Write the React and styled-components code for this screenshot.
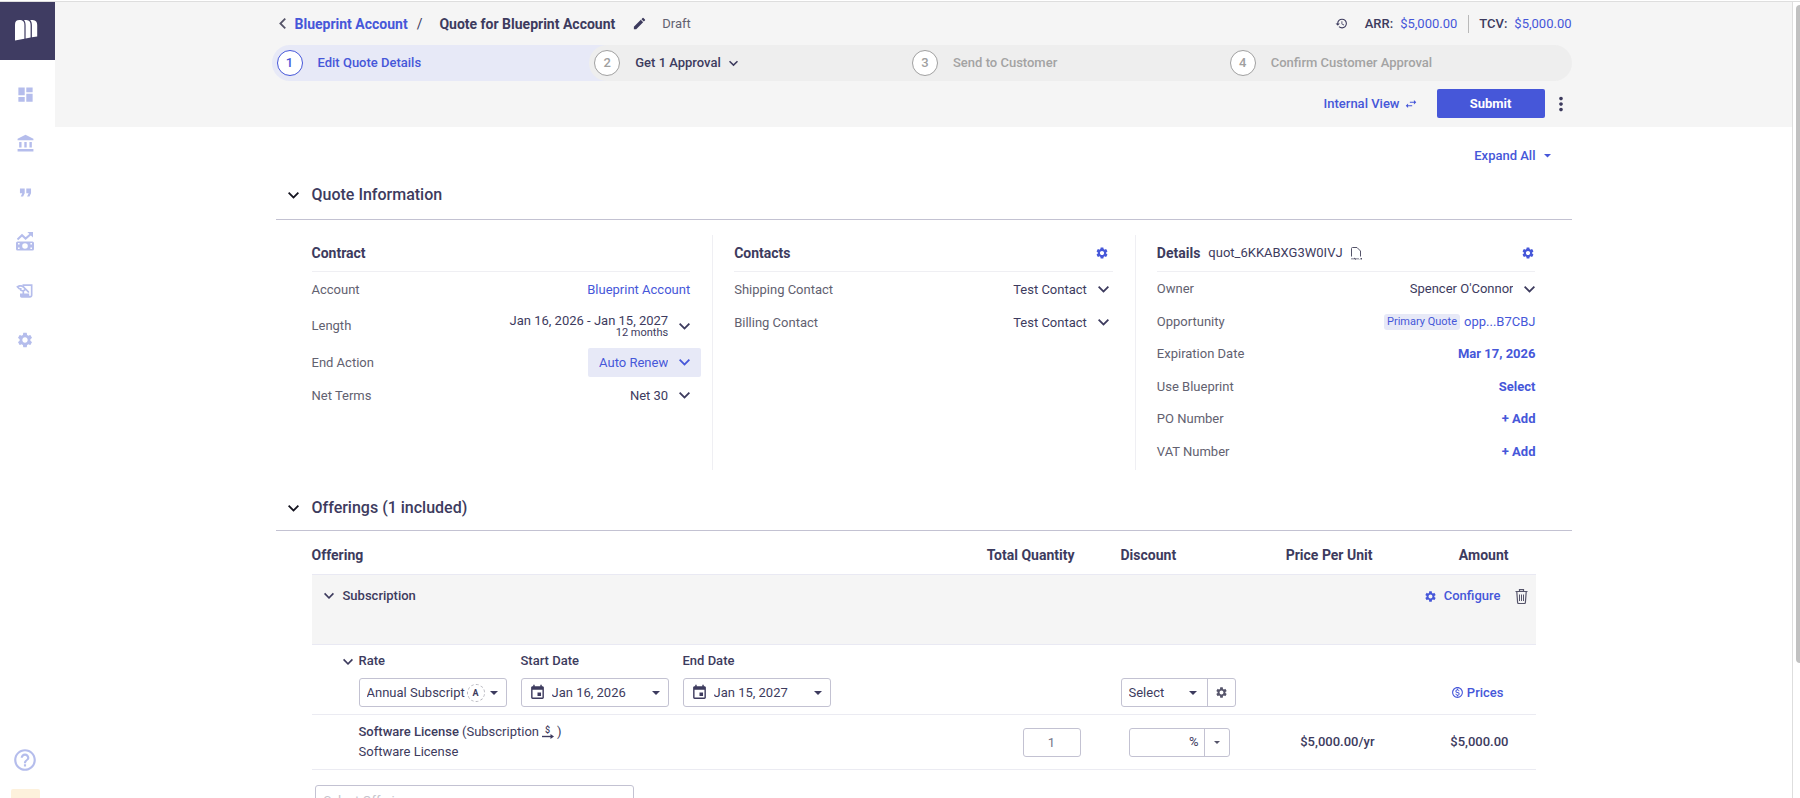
import React from 'react';
import styled, {createGlobalStyle} from 'styled-components';
import {
    MdDashboard,
    MdAccountBalance,
    MdFormatQuote,
    MdHistoryEdu,
    MdSettings,
    MdHelpOutline,
    MdHistory,
    MdEdit,
    MdSwapHoriz,
    MdMoreVert,
    MdEvent,
    MdOutlineMonetizationOn
} from 'react-icons/md';

const INK = '#3d3b5e';
const BLUE = '#4657d9';
const MUTED = '#626170';
const TINT = '#e7e9f7';
const FIELD = '#c3c2d2';

const GlobalStyle = createGlobalStyle`
    * {
        box-sizing: border-box;
    }

    body {
        margin: 0;
        background: #fff;
        color: ${INK};
        font-family: Roboto, "Liberation Sans", sans-serif;
        font-size: 13px;
        line-height: 18px;
    }

    button, input, select {
        margin: 0;
        padding: 0;
        border: 0;
        background: none;
        color: inherit;
        font: inherit;
        outline: none;
    }

    button {
        cursor: pointer;
    }

    a {
        color: ${BLUE};
        text-decoration: none;
    }

    svg {
        display: block;
        flex: none;
    }
`;

const Shell = styled.div`
    display: flex;
    height: 100vh;
    padding-top: 1px;
    overflow: hidden;
`;

const Sidebar = styled.nav`
    flex: none;
    width: 55px;
    display: flex;
    flex-direction: column;
    border-top: 1px solid #dedede;
`;

const LogoBox = styled.div`
    height: 58px;
    padding: 18px 15px;
    background: #3f3c62;
`;

const NavList = styled.div`
    flex: 1;
    width: 50px;
    padding-top: 10px;
    display: flex;
    flex-direction: column;
    align-items: center;
    color: #b5bdec;
`;

const NavLink = styled.a`
    width: 50px;
    height: 49px;
    display: flex;
    align-items: center;
    justify-content: center;
    color: inherit;
`;

const NavFooter = styled.div`
    margin-top: auto;
    display: flex;
    flex-direction: column;
    align-items: center;
    gap: 5px;
`;

const Notice = styled.div`
    width: 29px;
    height: 9px;
    border-radius: 2px 2px 0 0;
    background: #fdf1dc;
`;

const Main = styled.main`
    flex: 1;
    min-width: 0;
    overflow: hidden;
    border-top: 1px solid #dedede;
`;

const ScrollRail = styled.div`
    flex: none;
    width: 8px;
    padding: 3px 0 0 3px;
    border-top: 1px solid #dedede;
    border-left: 1px solid #dedede;
`;

const ScrollThumb = styled.div`
    height: 83%;
    border-radius: 4px 0 0 4px;
    background: #c1c1c1;
`;

const Container = styled.div`
    max-width: 1296px;
    margin: 0 auto;
`;

const Header = styled.header`
    padding-bottom: 9px;
    background: #f5f5f5;
`;

const TitleBar = styled.div`
    height: 43px;
    padding-left: 3px;
    display: flex;
    align-items: center;
    justify-content: space-between;
`;

const Crumbs = styled.div`
    display: flex;
    align-items: center;
    gap: 9px;
    font-size: 14px;
`;

const CrumbLink = styled.a`
    font-weight: 700;
`;

const QuoteTitle = styled.h1`
    margin: 0 8px;
    font-size: 14px;
    line-height: 18px;
    font-weight: 700;
`;

const Status = styled.span`
    margin-left: 6px;
    font-size: 13px;
    color: ${MUTED};
`;

const Totals = styled.div`
    display: flex;
    align-items: center;
`;

const Total = styled.div`
    display: flex;
    gap: 7px;
    padding-left: ${props => props.$divided ? '10px' : '17px'};
    margin-left: ${props => props.$divided ? '11px' : '0'};
    border-left: ${props => props.$divided ? '1px solid #b9b9b9' : '0'};

    b {
        font-weight: 500;
    }

    span {
        color: ${BLUE};
    }
`;

const IconButton = styled.button`
    display: flex;
    align-items: center;
    justify-content: center;
    color: ${props => props.$blue ? BLUE : INK};
`;

const Stepper = styled.ol`
    list-style: none;
    display: flex;
    margin: 0 0 0 -4px;
    padding: 0;
`;

/* each step slides under the round start of the next one */
const Step = styled.li`
    flex: 1;
    height: 36px;
    padding-left: 5px;
    display: flex;
    align-items: center;
    gap: 15px;
    border-radius: 18px ${props => props.$last ? '18px 18px' : '0 0'} 18px;
    background: ${props => props.$active ? TINT : '#eee'};
    color: ${props => props.$active ? BLUE : props.$next ? INK : '#a3a3a3'};
    font-weight: 500;

    & + & {
        margin-left: -29px;
    }
`;

const StepNumber = styled.span`
    width: 26px;
    height: 26px;
    display: flex;
    align-items: center;
    justify-content: center;
    border: 1px solid ${props => props.$active ? BLUE : '#a0a0a0'};
    border-radius: 50%;
    background: #fff;
    color: ${props => props.$active ? BLUE : '#a0a0a0'};
`;

const StepMenu = styled.button`
    display: flex;
    align-items: center;
    gap: 8px;
    font-weight: 500;
`;

const Actions = styled.div`
    margin-top: 8px;
    display: flex;
    align-items: center;
    justify-content: flex-end;
`;

const TextButton = styled.button`
    display: inline-flex;
    align-items: center;
    gap: ${props => props.$gap || 4}px;
    color: ${BLUE};
    font-weight: ${props => props.$strong ? 700 : 500};
`;

const SubmitButton = styled.button`
    width: 108px;
    height: 29px;
    margin: 0 5px 0 19px;
    border-radius: 2px;
    background: ${BLUE};
    color: #fff;
    font-weight: 700;
`;

const ExpandRow = styled.div`
    display: flex;
    justify-content: flex-end;
    padding: 20px 21px 0 0;
`;

const SectionHeader = styled.div`
    display: flex;
    align-items: center;
    gap: 13px;
    height: ${props => props.$tall ? '55px' : '51px'};
    padding: 6px 0 0 12px;
    border-bottom: 1px solid ${FIELD};

    h2 {
        margin: 0;
        font-size: 16px;
        line-height: 20px;
        font-weight: 500;
    }

    button {
        color: #14131f;
    }
`;

const Columns = styled.div`
    display: grid;
    grid-template-columns: repeat(3, 1fr);
    margin: 15px 14px 10px;
`;

const Column = styled.section`
    min-width: 0;
    padding: 0 22px 2px;

    & + & {
        padding-left: 21px;
        border-left: 1px solid #efeff3;
    }
`;

const ColumnHeader = styled.div`
    height: 37px;
    padding-right: ${props => props.$inset || 0}px;
    display: flex;
    align-items: center;
    justify-content: space-between;
    border-bottom: 1px solid #efeff3;
`;

const ColumnTitle = styled.div`
    display: flex;
    align-items: center;
    gap: 8px;

    h3 {
        margin: 0;
        font-size: 14px;
        line-height: 18px;
        font-weight: 700;
    }
`;

const Rows = styled.div`
    display: flex;
    flex-direction: column;
    height: ${props => props.$fill ? '196px' : 'auto'};
    padding: 1px ${props => props.$inset || 0}px 0 0;
`;

const Row = styled.div`
    flex: ${props => props.$fill ? '1' : 'none'};
    height: ${props => props.$tall ? '40px' : '33px'};
    display: flex;
    align-items: center;
    justify-content: space-between;

    & > label, & > span:first-child {
        color: ${MUTED};
    }
`;

const RowValue = styled.div`
    display: flex;
    align-items: center;
    gap: 4px;
`;

/* the select and its chevron share one grid cell */
const PickerBox = styled.span`
    height: 29px;
    margin-right: -11px;
    display: grid;
    align-items: center;
    border-radius: 2px;
    background: ${props => props.$active ? TINT : 'transparent'};
    color: ${props => props.$active ? BLUE : INK};

    & > * {
        grid-area: 1 / 1;
    }

    svg {
        justify-self: end;
        margin-right: 11px;
        pointer-events: none;
    }

    select {
        appearance: none;
        field-sizing: content;
        height: 29px;
        padding: 0 33px 0 11px;
        text-align: right;
    }
`;

const LengthButton = styled.button`
    display: flex;
    align-items: center;
    gap: 11px;
    text-align: right;
    line-height: 13px;

    small {
        display: block;
        font-size: 11px;
        line-height: 12px;
    }
`;

const Tag = styled.span`
    padding: 0 3px;
    border-radius: 3px;
    background: ${TINT};
    color: ${BLUE};
    font-size: 11px;
    line-height: 16px;
`;

const Table = styled.table`
    width: calc(100% - 72px);
    margin: 0 36px;
    border-collapse: separate;
    border-spacing: 0;
    table-layout: fixed;
`;

const HeadCell = styled.th`
    height: 43px;
    padding: 5px ${props => props.$end || 0}px 0 ${props => props.$start || 0}px;
    width: ${props => props.$width ? props.$width + 'px' : 'auto'};
    text-align: ${props => props.$end ? 'right' : 'left'};
    font-size: 14px;
    font-weight: 700;
`;

const GroupCell = styled.td`
    height: 71px;
    padding: 12px 8px 0 12px;
    vertical-align: top;
    border-top: 1px solid #e9e9f3;
    border-bottom: 1px solid #e9e9f3;
    background: #f5f5f5;
`;

const GroupBar = styled.div`
    display: flex;
    align-items: center;
    gap: 9px;
    font-weight: 500;

    & > :nth-child(3) {
        margin-left: auto;
        margin-right: 5px;
    }
`;

const Cell = styled.td`
    padding: ${props => props.$top || 0}px ${props => props.$end || 0}px ${props => props.$flush ? 0 : 7}px ${props => props.$start || 0}px;
    border-bottom: 1px solid #ebebf2;
    text-align: ${props => props.$end ? 'right' : 'left'};
    vertical-align: ${props => props.$bottom ? 'bottom' : 'middle'};
    font-weight: ${props => props.$strong ? 500 : 400};
`;

const RateRow = styled.div`
    display: flex;
    gap: 14px;
    align-items: flex-start;
`;

const Field = styled.div`
    display: flex;
    flex-direction: column;
    gap: 8px;
    width: 148px;

    label {
        font-weight: 500;
    }
`;

const RowToggle = styled.button`
    height: 20px;
    margin-right: -8px;
`;

const ControlBox = styled.div`
    height: 29px;
    width: ${props => props.$width ? props.$width + 'px' : '100%'};
    padding: 0 ${props => props.$split ? 0 : 8}px 0 7px;
    display: inline-flex;
    align-items: center;
    gap: ${props => props.$gap || 0}px;
    border: 1px solid ${FIELD};
    border-radius: 3px;
    vertical-align: top;

    input, select {
        appearance: none;
        flex: 1;
        min-width: 0;
        width: 0;
    }
`;

const SplitButton = styled.button`
    width: ${props => props.$width}px;
    height: 27px;
    margin-left: ${props => props.$near ? 5 : 10}px;
    display: flex;
    align-items: center;
    justify-content: center;
    border-left: 1px solid ${FIELD};
    color: #55546a;
`;

const AutoBadge = styled.span`
    width: 18px;
    height: 18px;
    margin-right: 5px;
    border: 1px dashed #b5b5bd;
    border-radius: 50%;
    text-align: center;
    font-size: 9px;
    line-height: 16px;
    font-weight: 700;
`;

const PricesRow = styled.div`
    height: 29px;
    display: flex;
    align-items: center;
    justify-content: flex-end;
`;

const ItemName = styled.div`
    display: flex;
    align-items: center;
    gap: 3px;
    line-height: 20px;

    b {
        font-weight: 500;
    }
`;

const QuantityInput = styled.input`
    width: 58px;
    height: 29px;
    border: 1px solid ${FIELD};
    border-radius: 3px;
    text-align: center;
    color: #77768a;
`;

const OfferingInput = styled.input`
    display: block;
    width: 319px;
    height: 31px;
    margin: 15px 0 40px 39px;
    padding: 0 8px;
    border: 1px solid ${FIELD};
    border-radius: 3px;

    &::placeholder {
        color: #c4c4cc;
        opacity: 1;
    }
`;

const Chevron = ({size = 11}) => (
    <svg width={size} height={size} viewBox="6 6 12 12" fill="currentColor" aria-hidden="true">
        <path d="M16.6 8.2 12 12.8 7.4 8.2 6 9.6l6 6 6-6z"/>
    </svg>
);

const ChevronBack = () => (
    <svg width="7" height="11" viewBox="8 6 7.4 12" fill="#555468" aria-hidden="true">
        <path d="M15.4 7.4 14 6l-6 6 6 6 1.4-1.4L10.8 12z"/>
    </svg>
);

const Caret = ({size = 8}) => (
    <svg width={size} height={size / 2} viewBox="0 0 8 4" fill="currentColor" aria-hidden="true">
        <path d="M0 0h8L4 4z"/>
    </svg>
);

const Logo = () => (
    <svg width="23" height="21" viewBox="0 0 23 21" fill="#fff" role="img" aria-label="Home">
        <path d="M0 4.5C0 1.4 1.6 0 4.3 0 8 0 9.4 1.6 9.4 5.2v13.6L0 20.6z"/>
        <path d="M9 0h2.200c3.400.2 4.400 2.100 4.400 5v12.600l-5 .9V5.600C10.600 3.200 10.200 1.400 9 0z"/>
        <path d="M15.200 0h2.400c3.400.2 4.600 2.100 4.600 5v11.400l-5.300.9V5.600c0-2.400-.4-4.200-1.700-5.600z"/>
    </svg>
);

const RevenueIcon = () => (
    <svg width="18" height="19" viewBox="0 0 18 19" aria-hidden="true">
        <path d="M1.5 7.4 6 3.2l3.6 3.4 5.6-4.9" fill="none" stroke="currentColor" strokeWidth="2"/>
        <path d="M11.4 0H17v5.6z" fill="currentColor"/>
        <path
            fill="currentColor"
            fillRule="evenodd"
            d="M1.6 9.4h14.8A1.6 1.6 0 0 1 18 11v6a1.6 1.6 0 0 1-1.6 1.6H1.6A1.6 1.6 0 0 1 0 17v-6a1.6 1.6 0 0 1 1.6-1.6zM9 11.2a2.8 2.8 0 1 0 0 5.6 2.8 2.8 0 0 0 0-5.6zM2 11v1.6h1.6V11zm0 4.4V17h1.6v-1.6zM14.4 11v1.6H16V11zm0 4.4V17H16v-1.6z"
        />
    </svg>
);

const CopyIdIcon = () => (
    <svg width="11" height="13" viewBox="0 0 11 13" fill="none" stroke="#55546a" aria-hidden="true">
        <path d="M.5 9.5v-8q0-1 1-1H6L9.5 4v5.5"/>
        <path d="M1 12.500V11M3 12.500V11l2 1.500V11M7 12.500V11M9 12.500l1.500-1.500v1.500"/>
    </svg>
);

const TrashIcon = () => (
    <svg width="13" height="15" viewBox="0 0 13 15" fill="none" stroke="#55546a" aria-hidden="true">
        <path d="M.5 2.500h12M4.500 2.200V.6h4v1.600M1.800 2.800l.8 10.700q.1 1 1 1h5.800q.9 0 1-1l.8-10.700" strokeWidth="1.200"/>
        <path d="M4.500 5.500v6.500M6.500 5.500v6.500M8.500 5.500v6.500"/>
    </svg>
);

const RecurringIcon = () => (
    <svg width="12" height="14" viewBox="0 0 12 14" aria-hidden="true">
        <text x="3" y="8" fontSize="9" fontWeight="500" fill={INK}>$</text>
        <path d="M0 11.500h9" stroke={INK} strokeWidth="1.400"/>
        <path d="M8.500 9l3.500 2.500L8.500 14z" fill={INK}/>
    </svg>
);

const Picker = ({id, label, value, active, ...rest}) => (
    <Row {...rest}>
        <label htmlFor={id}>{label}</label>
        <PickerBox $active={active}>
            <select id={id} defaultValue={value}>
                <option>{value}</option>
            </select>
            <Chevron/>
        </PickerBox>
    </Row>
);

const DateField = ({id, label, value}) => (
    <Field>
        <label htmlFor={id}>{label}</label>
        <ControlBox $gap={6}>
            <MdEvent size={17}/>
            <input id={id} defaultValue={value}/>
            <Caret/>
        </ControlBox>
    </Field>
);

const navItems = [
    ['Dashboard', <MdDashboard size={19}/>],
    ['Accounts', <MdAccountBalance size={19}/>],
    ['Quotes', <MdFormatQuote size={19}/>],
    ['Revenue', <RevenueIcon/>],
    ['Contracts', <MdHistoryEdu size={20}/>],
    ['Settings', <MdSettings size={18}/>]
];

export default function App() {
    return (
        <Shell>
            <GlobalStyle/>

            <Sidebar>
                <LogoBox><Logo/></LogoBox>
                <NavList>
                    {navItems.map(([name, icon]) => (
                        <NavLink key={name} href="#" aria-label={name}>{icon}</NavLink>
                    ))}
                    <NavFooter>
                        <NavLink href="#" aria-label="Help"><MdHelpOutline size={26}/></NavLink>
                        <Notice/>
                    </NavFooter>
                </NavList>
            </Sidebar>

            <Main>
                <Header>
                    <Container>
                        <TitleBar>
                            <Crumbs>
                                <IconButton aria-label="Back"><ChevronBack/></IconButton>
                                <CrumbLink href="#">Blueprint Account</CrumbLink>
                                <span>/</span>
                                <QuoteTitle>Quote for Blueprint Account</QuoteTitle>
                                <IconButton aria-label="Rename"><MdEdit size={15}/></IconButton>
                                <Status>Draft</Status>
                            </Crumbs>
                            <Totals>
                                <IconButton aria-label="History"><MdHistory size={13}/></IconButton>
                                <Total><b>ARR:</b><span>$5,000.00</span></Total>
                                <Total $divided><b>TCV:</b><span>$5,000.00</span></Total>
                            </Totals>
                        </TitleBar>

                        <Stepper>
                            <Step $active><StepNumber $active>1</StepNumber>Edit Quote Details</Step>
                            <Step $next>
                                <StepNumber>2</StepNumber>
                                <StepMenu>Get 1 Approval <Chevron size={9}/></StepMenu>
                            </Step>
                            <Step><StepNumber>3</StepNumber>Send to Customer</Step>
                            <Step $last><StepNumber>4</StepNumber>Confirm Customer Approval</Step>
                        </Stepper>

                        <Actions>
                            <TextButton>Internal View <MdSwapHoriz size={14}/></TextButton>
                            <SubmitButton>Submit</SubmitButton>
                            <IconButton aria-label="More"><MdMoreVert size={22}/></IconButton>
                        </Actions>
                    </Container>
                </Header>

                <Container>
                    <ExpandRow>
                        <TextButton $gap={8}>Expand All <Caret size={7}/></TextButton>
                    </ExpandRow>

                    <SectionHeader $tall>
                        <IconButton aria-label="Toggle quote information"><Chevron/></IconButton>
                        <h2>Quote Information</h2>
                    </SectionHeader>

                    <Columns>
                        <Column>
                            <ColumnHeader><ColumnTitle><h3>Contract</h3></ColumnTitle></ColumnHeader>
                            <Rows>
                                <Row><span>Account</span><a href="#">Blueprint Account</a></Row>
                                <Row $tall>
                                    <span>Length</span>
                                    <LengthButton>
                                        <span>Jan 16, 2026 - Jan 15, 2027<small>12 months</small></span>
                                        <Chevron/>
                                    </LengthButton>
                                </Row>
                                <Picker id="end-action" label="End Action" value="Auto Renew" active/>
                                <Picker id="net-terms" label="Net Terms" value="Net 30"/>
                            </Rows>
                        </Column>

                        <Column>
                            <ColumnHeader $inset={4}>
                                <ColumnTitle><h3>Contacts</h3></ColumnTitle>
                                <IconButton $blue aria-label="Contact settings"><MdSettings size={14}/></IconButton>
                            </ColumnHeader>
                            <Rows $inset={4}>
                                <Picker id="shipping" label="Shipping Contact" value="Test Contact"/>
                                <Picker id="billing" label="Billing Contact" value="Test Contact"/>
                            </Rows>
                        </Column>

                        <Column>
                            <ColumnHeader>
                                <ColumnTitle>
                                    <h3>Details</h3>
                                    <span>quot_6KKABXG3W0IVJ</span>
                                    <IconButton aria-label="Copy id"><CopyIdIcon/></IconButton>
                                </ColumnTitle>
                                <IconButton $blue aria-label="Detail settings"><MdSettings size={14}/></IconButton>
                            </ColumnHeader>
                            <Rows $fill>
                                <Picker $fill id="owner" label="Owner" value="Spencer O'Connor"/>
                                <Row $fill>
                                    <span>Opportunity</span>
                                    <RowValue><Tag>Primary Quote</Tag><a href="#">opp...B7CBJ</a></RowValue>
                                </Row>
                                <Row $fill><span>Expiration Date</span><TextButton $strong>Mar 17, 2026</TextButton></Row>
                                <Row $fill><span>Use Blueprint</span><TextButton $strong>Select</TextButton></Row>
                                <Row $fill><span>PO Number</span><TextButton $strong>+ Add</TextButton></Row>
                                <Row $fill><span>VAT Number</span><TextButton $strong>+ Add</TextButton></Row>
                            </Rows>
                        </Column>
                    </Columns>

                    <SectionHeader>
                        <IconButton aria-label="Toggle offerings"><Chevron/></IconButton>
                        <h2>Offerings (1 included)</h2>
                    </SectionHeader>

                    <Table>
                        <thead>
                            <tr>
                                <HeadCell>Offering</HeadCell>
                                <HeadCell $width={143} $end={20}>Total Quantity</HeadCell>
                                <HeadCell $width={154} $start={26}>Discount</HeadCell>
                                <HeadCell $width={148} $end={24}>Price Per Unit</HeadCell>
                                <HeadCell $width={139} $end={27}>Amount</HeadCell>
                            </tr>
                        </thead>
                        <tbody>
                            <tr>
                                <GroupCell colSpan={5}>
                                    <GroupBar>
                                        <IconButton aria-label="Toggle subscription"><Chevron size={10}/></IconButton>
                                        <span>Subscription</span>
                                        <TextButton $gap={7}><MdSettings size={13}/> Configure</TextButton>
                                        <IconButton aria-label="Delete"><TrashIcon/></IconButton>
                                    </GroupBar>
                                </GroupCell>
                            </tr>
                            <tr>
                                <Cell $start={31} $top={7}>
                                    <RateRow>
                                        <RowToggle aria-label="Toggle rate"><Chevron size={10}/></RowToggle>
                                        <Field>
                                            <label htmlFor="rate">Rate</label>
                                            <ControlBox>
                                                <select id="rate"><option>Annual Subscript</option></select>
                                                <AutoBadge>A</AutoBadge>
                                                <Caret/>
                                            </ControlBox>
                                        </Field>
                                        <DateField id="start" label="Start Date" value="Jan 16, 2026"/>
                                        <DateField id="end" label="End Date" value="Jan 15, 2027"/>
                                    </RateRow>
                                </Cell>
                                <Cell/>
                                <Cell $start={26} $bottom>
                                    <ControlBox $width={115} $split>
                                        <select aria-label="Discount"><option>Select</option></select>
                                        <Caret/>
                                        <SplitButton $width={28} aria-label="Discount settings">
                                            <MdSettings size={13}/>
                                        </SplitButton>
                                    </ControlBox>
                                </Cell>
                                <Cell/>
                                <Cell $end={32} $bottom>
                                    <PricesRow>
                                        <TextButton $gap={3}><MdOutlineMonetizationOn size={13}/>Prices</TextButton>
                                    </PricesRow>
                                </Cell>
                            </tr>
                            <tr>
                                <Cell $start={47} $top={7}>
                                    <ItemName><b>Software License</b> (Subscription <RecurringIcon/>)</ItemName>
                                    <ItemName>Software License</ItemName>
                                </Cell>
                                <Cell $end={14} $flush><QuantityInput aria-label="Quantity" defaultValue="1"/></Cell>
                                <Cell $start={34} $flush>
                                    <ControlBox $width={101} $split>
                                        <input aria-label="Discount percent"/>
                                        %
                                        <SplitButton $width={25} $near aria-label="Discount unit"><Caret size={6}/></SplitButton>
                                    </ControlBox>
                                </Cell>
                                <Cell $end={22} $flush $strong>$5,000.00/yr</Cell>
                                <Cell $end={27} $flush $strong>$5,000.00</Cell>
                            </tr>
                        </tbody>
                    </Table>

                    <OfferingInput aria-label="Select Offering" placeholder="Select Offering"/>
                </Container>
            </Main>

            <ScrollRail><ScrollThumb/></ScrollRail>
        </Shell>
    );
}
